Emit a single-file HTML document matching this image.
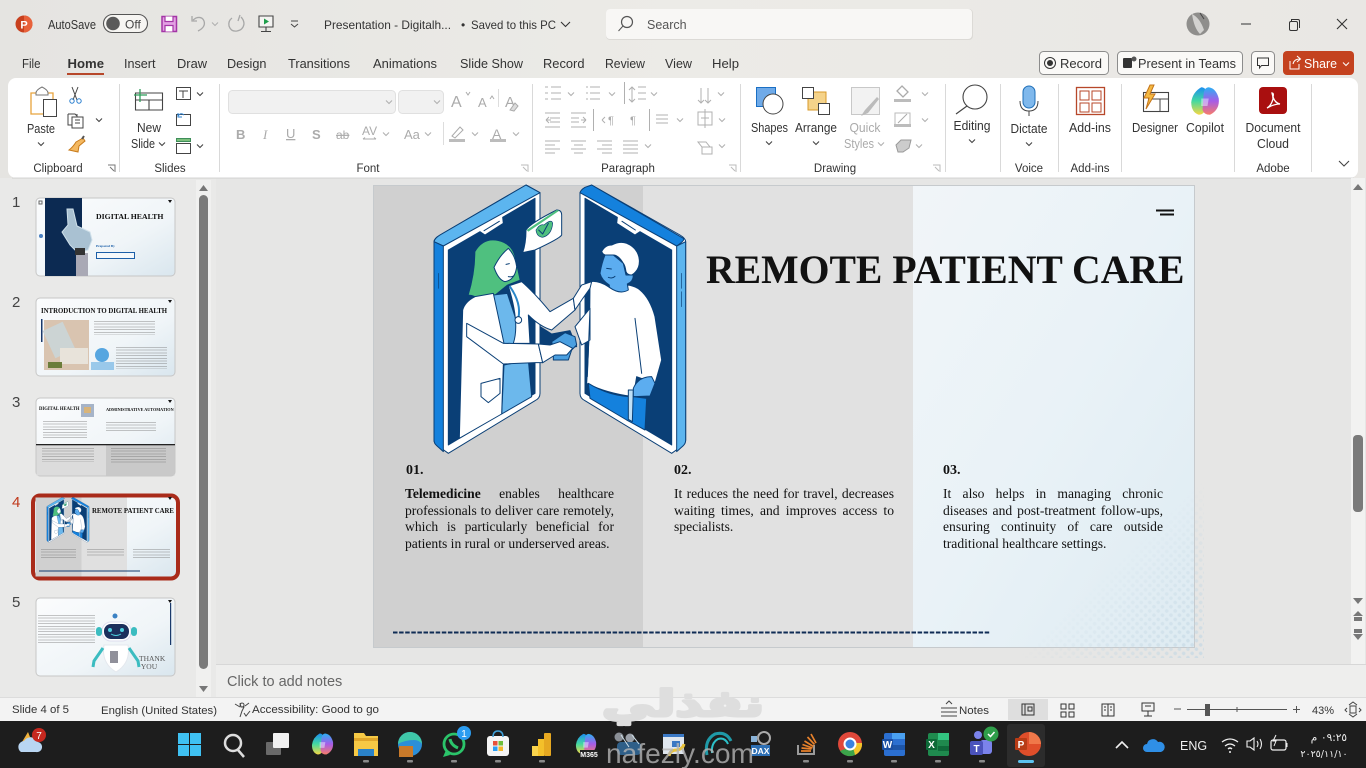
<!DOCTYPE html>
<html><head><meta charset="utf-8"><title>PowerPoint</title>
<style>
html,body{margin:0;padding:0;width:1366px;height:768px;overflow:hidden;background:#e6e6e5;font-family:"Liberation Sans",sans-serif}
#bg{position:absolute;left:0;top:0}
svg text{font-family:"Liberation Sans","DejaVu Sans",sans-serif;font-size:12.5px;fill:#333}
.c{text-anchor:middle}
.p{position:absolute;font-family:"Liberation Serif",serif;font-size:13.6px;line-height:16.67px;color:#111}
.p div{text-align:justify;text-align-last:justify;white-space:nowrap}
.p div.l{text-align-last:left}
.n{position:absolute;font-family:"Liberation Serif",serif;font-weight:bold;font-size:14px;color:#111}
.b{position:absolute;background:repeating-linear-gradient(#777 0 1px,transparent 1px 2.7px);opacity:.42}
.t{position:absolute;font-family:"Liberation Serif",serif;font-weight:bold;color:#111;white-space:nowrap}
</style></head><body>
<svg id="bg" width="1366" height="768" viewBox="0 0 1366 768" xmlns="http://www.w3.org/2000/svg">
<defs>
<linearGradient id="tb" x1="0" x2="1"><stop offset="0" stop-color="#e5e4e1"/><stop offset=".5" stop-color="#ecebe7"/><stop offset="1" stop-color="#e9e7e4"/></linearGradient>
<linearGradient id="sr" x1="0" y1="0" x2="1" y2="1"><stop offset="0" stop-color="#f1f5f8"/><stop offset=".5" stop-color="#e9f2f7"/><stop offset="1" stop-color="#deebf2"/></linearGradient>
<linearGradient id="th" x1="0" y1="0" x2="1" y2="1"><stop offset="0" stop-color="#fbfcfd"/><stop offset=".6" stop-color="#f0f5f8"/><stop offset="1" stop-color="#d9e6ee"/></linearGradient>
<linearGradient id="copA" x1="0" y1="0" x2="0" y2="1"><stop offset="0" stop-color="#1b8ef0"/><stop offset=".5" stop-color="#44d9a0"/><stop offset="1" stop-color="#f6d743"/></linearGradient>
<linearGradient id="copB" x1="0" y1="0" x2="0" y2="1"><stop offset="0" stop-color="#2ab0f5"/><stop offset=".5" stop-color="#a65ce8"/><stop offset="1" stop-color="#f77c6a"/></linearGradient>
<linearGradient id="fade" x1="0" y1="0" x2="1" y2="1"><stop offset=".55" stop-color="#000"/><stop offset="1" stop-color="#ddd"/></linearGradient>
<mask id="hm"><rect x="980" y="440" width="240" height="230" fill="url(#fade)"/></mask>
<pattern id="dots" width="6" height="6" patternUnits="userSpaceOnUse" patternTransform="rotate(45)"><circle cx="3" cy="3" r="1.8" fill="#c4d8e4"/></pattern>
<symbol id="ill" viewBox="0 0 840 840">
<g stroke="#0a3f76" stroke-width="3" stroke-linejoin="round" stroke-linecap="round">
<path d="M345 430L395 462L450 452L470 500L400 505L345 495Z" fill="#0a3f76"/>
<path d="M42 185Q42 175 60 165L318 15L360 38V640Q360 655 345 662L85 820L50 795Q42 788 42 780Z" fill="#fff"/>
<path d="M42 185Q44 175 60 165L318 15L360 38L70 198Z" fill="#5cb5ef"/>
<path d="M42 185L70 198V815L50 797Q42 790 42 780Z" fill="#1481dd"/>
<path d="M85 210L180 155L195 165L250 130L248 112L345 55V640L85 795Z" fill="#0a3f76"/>
<path d="M192 152L238 124" fill="none"/>
<path d="M56 280V325" stroke-width="2" fill="none"/>
<path d="M797 185Q797 175 780 165L515 15L480 38V640Q480 655 495 662L755 820L790 795Q797 788 797 780Z" fill="#fff"/>
<path d="M480 38Q482 30 495 22L515 15L790 175Q797 180 770 198Z" fill="#1481dd"/>
<path d="M797 185L770 198V815L790 797Q797 790 797 780Z" fill="#5cb5ef"/>
<path d="M755 210L660 155L645 165L590 130L592 112L495 55V640L755 795Z" fill="#0a3f76"/>
<path d="M606 124L646 150" fill="none"/>
<path d="M784 280V325M784 335V380" stroke-width="2" fill="none"/>
<path d="M145 345Q165 280 165 215Q190 172 235 182Q280 192 287 240L300 300L262 315L225 345Q225 385 245 435Q205 395 190 365Q165 345 145 345Z" fill="#4fc07f" stroke-width="2"/>
<path d="M222 262Q240 225 265 205Q285 225 290 260Q285 300 255 305Q235 300 222 262Z" fill="#fff"/>
<path d="M258 253l10 -2M265 290q10 2 17 -3" fill="none"/>
<path d="M220 345L262 340L305 470L330 490L250 495Z" fill="#6cb8ec"/>
<path d="M252 555L325 540L335 650L245 702Z" fill="#6cb8ec"/>
<path d="M118 775L128 390Q135 365 165 350L220 340L252 490L270 490L250 555L245 702Z" fill="#fff"/>
<path d="M265 318L305 305Q340 335 390 395L460 355L465 390L395 450Q360 440 325 405L330 490L280 490Q300 430 265 318Z" fill="#fff"/>
<path d="M183 610L240 595V640L205 668L183 650Z" fill="#fff"/>
<path d="M270 320Q305 370 295 415" fill="none" stroke="#2a87c8" stroke-width="6"/>
<circle cx="295" cy="420" r="10" fill="#fff"/>
<path d="M140 430L250 490L355 492L368 548L345 548L250 552L140 470Z" fill="#fff"/>
<path d="M500 610Q510 450 510 305Q535 300 565 320Q600 345 625 315Q650 320 660 330Q690 355 705 410L725 540L705 610L650 590L640 650Q560 640 500 610Z" fill="#fff"/>
<path d="M510 385L465 440L485 495L510 480Z" fill="#fff"/>
<path d="M510 385L502 590M645 415L665 580" fill="none"/>
<path d="M395 485L435 458L465 470L470 495L455 510L400 505Z" fill="#4a9fe0"/>
<path d="M400 520L455 510L445 540L400 540Z" fill="#4a9fe0"/>
<path d="M355 492L390 495L420 485L458 505L440 525L405 525L368 548Z" fill="#fff"/>
<path d="M460 355L485 315L515 305L510 325L485 360L465 390Z" fill="#fff"/>
<path d="M505 610Q570 650 640 650L680 655L675 750L620 720L510 655Z" fill="#1481dd"/>
<path d="M625 630L640 630L637 725L625 718Z" fill="#bfe0f7"/>
<path d="M640 625Q655 590 695 590L705 610L690 648L640 650Z" fill="#5cadf0"/>
<circle cx="625" cy="295" r="14" fill="#5cadf0"/>
<path d="M555 225L580 225L610 250L618 285L640 285Q640 305 622 312L625 330Q600 345 568 322L568 315Q545 300 540 280Q545 250 555 225Z" fill="#5cadf0"/>
<path d="M545 215Q555 195 575 195Q600 182 620 190Q655 205 658 240Q660 270 635 285Q622 285 618 275Q615 255 610 250Q595 225 580 225L555 225Q548 222 545 215Z" fill="#fff"/>
<path d="M560 265l14 2M565 292q12 5 20 -3" fill="none"/>
<path d="M318 150Q330 130 410 90Q425 90 425 105L425 165Q420 175 345 210L308 218Q318 190 318 150Z" fill="#fff"/>
<path d="M320 150L410 90L418 92L325 155Z" fill="#4fc07f" stroke="none"/>
<path d="M348 150Q360 130 372 135Q395 115 398 130Q395 165 368 172Q350 170 348 150Z" fill="#4fc07f" stroke-width="2"/>
<path d="M356 150L368 162L385 130" fill="none"/>
</g>
</symbol>
<symbol id="cp" viewBox="0 0 24 24"><path d="M9 1Q12 1 13 4L12 20Q10 23 7 23Q1 21 1 13Q2 5 9 1Z" fill="url(#copA)"/><path d="M15 1Q21 2 23 10Q24 19 16 23Q11 23 10 19L11 5Q12 1 15 1Z" fill="url(#copB)"/><path d="M9 10h6l-1 6H9z" fill="#eaf2ff" opacity=".5"/></symbol>
<g id="chv"><path d="M-3 -1.5L0 1.5L3 -1.5" fill="none" stroke="#444" stroke-width="1.1"/></g>
<g id="chg"><path d="M-3 -1.5L0 1.5L3 -1.5" fill="none" stroke="#b0b0b0" stroke-width="1.1"/></g>
</defs>

<rect width="1366" height="180" fill="url(#tb)"/>
<rect y="178" width="1366" height="490" fill="#e6e6e5"/>
<rect x="0" y="178" width="216" height="520" fill="#e9e9e8"/>

<!-- title bar -->
<circle cx="24" cy="24" r="8.5" fill="#c8401e"/><path d="M24 15.5a8.5 8.500 0 0 1 0 17z" fill="#e8613a"/><text x="24" y="28.500" class="c" style="font-size:11px;font-weight:bold;fill:#fff">P</text>
<text x="48" y="29" textLength="48" lengthAdjust="spacingAndGlyphs">AutoSave</text>
<rect x="103.500" y="14.500" width="44" height="18" rx="9" fill="#f6f5f2" stroke="#555" stroke-width="1.100"/><circle cx="113" cy="23.500" r="6.800" fill="#5a5a5a"/><text x="125" y="28.500" style="font-size:12px;fill:#444">Off</text>
<rect x="162" y="16.500" width="14.500" height="15" fill="#e3a1e3" stroke="#a436a6" stroke-width="1.500"/><path d="M165 16.500v5h8v-5M165 31.500v-6h8v6" fill="#fff" stroke="#a436a6" stroke-width="1.200"/>
<path d="M198 31q8 -4 6 -10q-2 -5 -8 -3l-3 2M192 16v5h5" fill="none" stroke="#a8a8a8" stroke-width="1.300"/><use href="#chg" x="215" y="24"/>
<path d="M232 18q-4 3 -3 8q2 6 8 5q6 -1 7 -7q0 -4 -3 -7M240 15l-2 6" fill="none" stroke="#a8a8a8" stroke-width="1.300"/>
<path d="M259 16h14v11h-14zM266 27v4M261 31.500h10" fill="#f4f4f2" stroke="#444" stroke-width="1.100"/><path d="M264 18.500l5 3l-5 3z" fill="#1e9e4a"/>
<path d="M291 21h7M291 24l3.500 3l3.500 -3" fill="none" stroke="#444"/>
<text x="324" y="29" style="font-size:12px" textLength="127" lengthAdjust="spacingAndGlyphs">Presentation - Digitalh...</text><text x="461" y="29" style="font-size:12px">•</text><text x="471" y="29" style="font-size:12px" textLength="85" lengthAdjust="spacingAndGlyphs">Saved to this PC</text><path d="M561 22l4.500 4.500l4.500 -4.500" fill="none" stroke="#333" stroke-width="1.100"/>
<rect x="606" y="9" width="367" height="31" rx="4" fill="#dcdad6"/><rect x="606" y="9" width="366" height="30" rx="4" fill="#f8f7f5"/>
<circle cx="627" cy="22" r="5.500" fill="none" stroke="#555" stroke-width="1.200"/><path d="M623 26l-4.500 5" stroke="#555" fill="none"/><text x="647" y="29" style="font-size:12.500px;fill:#555">Search</text>
<circle cx="1198" cy="24" r="11.500" fill="#8f8e8c"/><path d="M1192 14q8 4 12 16l-4 4q-6 -6 -8 -20z" fill="#d3d2d0"/><path d="M1200 13l4 6" stroke="#444"/>
<path d="M1241 24h10" stroke="#333" stroke-width="1"/><rect x="1289.500" y="21.500" width="8" height="9" rx="1.500" fill="none" stroke="#333"/><path d="M1291.500 21v-1.500h6.500q1.500 0 1.500 1.500v7" fill="none" stroke="#333"/><path d="M1337 19l10 10M1347 19l-10 10" stroke="#333" stroke-width="1.100"/>

<!-- tabs -->
<text x="22" y="68" textLength="18.500" lengthAdjust="spacingAndGlyphs">File</text><text x="67.500" y="68" textLength="36.500" lengthAdjust="spacingAndGlyphs" style="font-weight:bold">Home</text><text x="124" y="68" textLength="31.500" lengthAdjust="spacingAndGlyphs">Insert</text><text x="177" y="68" textLength="30" lengthAdjust="spacingAndGlyphs">Draw</text><text x="227" y="68" textLength="39.500" lengthAdjust="spacingAndGlyphs">Design</text><text x="288" y="68" textLength="62" lengthAdjust="spacingAndGlyphs">Transitions</text><text x="373" y="68" textLength="64" lengthAdjust="spacingAndGlyphs">Animations</text><text x="460" y="68" textLength="63" lengthAdjust="spacingAndGlyphs">Slide Show</text><text x="543" y="68" textLength="41.500" lengthAdjust="spacingAndGlyphs">Record</text><text x="605" y="68" textLength="40" lengthAdjust="spacingAndGlyphs">Review</text><text x="665" y="68" textLength="27" lengthAdjust="spacingAndGlyphs">View</text><text x="712" y="68" textLength="27" lengthAdjust="spacingAndGlyphs">Help</text>
<rect x="67" y="73" width="37" height="2" fill="#b7472a"/>
<rect x="1039.500" y="51.500" width="69" height="23" rx="4" fill="#faf9f7" stroke="#8c8c8c"/><circle cx="1050" cy="63" r="5.500" fill="none" stroke="#333"/><circle cx="1050" cy="63" r="3" fill="#333"/><text x="1060" y="68" textLength="42" lengthAdjust="spacingAndGlyphs">Record</text>
<rect x="1117.500" y="51.500" width="125" height="23" rx="4" fill="#faf9f7" stroke="#8c8c8c"/><rect x="1123" y="58" width="9" height="10" rx="1" fill="#333"/><circle cx="1134" cy="59" r="2.500" fill="#555"/><text x="1138" y="68" textLength="98" lengthAdjust="spacingAndGlyphs">Present in Teams</text>
<rect x="1251.500" y="51.500" width="23" height="23" rx="4" fill="#faf9f7" stroke="#8c8c8c"/><path d="M1257.500 58h11v7.500h-7l-2 2.500v-2.500h-2z" fill="none" stroke="#333"/>
<rect x="1283" y="51" width="71" height="24" rx="4" fill="#c4421f"/><path d="M1290 61v8h9v-5M1293 64q1 -5 7 -5M1297 56l3.500 3l-3.500 3" fill="none" stroke="#fff"/><text x="1304" y="68" textLength="33" lengthAdjust="spacingAndGlyphs" style="fill:#fff">Share</text><path d="M1343 62.500l3 3l3 -3" fill="none" stroke="#fff"/>

<!-- ribbon -->
<rect x="8" y="78" width="1350" height="100" rx="8" fill="#fff"/><rect x="12" y="177.500" width="1342" height="1.200" fill="#d6d6d5"/>
<g stroke="#d9d9d9"><path d="M119.500 84V172M219.500 84V172M532.500 84V172M740.500 84V172M945.500 84V172M1000.500 84V172M1058.500 84V172M1121.500 84V172M1234.500 84V172M1311.500 84V172"/></g>
<text x="58" y="172" class="c" style="font-size:11.500px">Clipboard</text><text x="170" y="172" class="c" style="font-size:11.500px">Slides</text><text x="368" y="172" class="c" style="font-size:11.500px">Font</text><text x="628" y="172" class="c" style="font-size:11.500px">Paragraph</text><text x="835" y="172" class="c" style="font-size:11.500px">Drawing</text><text x="1029" y="172" class="c" style="font-size:11.500px">Voice</text><text x="1090" y="172" class="c" style="font-size:11.500px">Add-ins</text><text x="1273" y="172" class="c" style="font-size:11.500px">Adobe</text>
<path d="M108 165h7v7M110 167l4 4" fill="none" stroke="#777"/><path d="M521 165h7v7M523 167l4 4" fill="none" stroke="#bbb"/><path d="M729 165h7v7M731 167l4 4" fill="none" stroke="#bbb"/><path d="M933 165h7v7M935 167l4 4" fill="none" stroke="#bbb"/>

<!-- clipboard -->
<path d="M31 93h22v21h-22z" fill="#fff" stroke="#e8a33d" stroke-width="1.300"/><path d="M36 93q0 -3 6 -6q6 3 6 6v2h-12z" fill="#fff" stroke="#777"/><rect x="43.500" y="99.500" width="13" height="17" fill="#fff" stroke="#444"/>
<text x="41" y="133" class="c" textLength="28" lengthAdjust="spacingAndGlyphs">Paste</text><use href="#chv" x="41" y="144"/>
<path d="M72 87l5 13M78 87l-5 13" stroke="#444" fill="none"/><circle cx="72" cy="101" r="2.200" fill="none" stroke="#2a7fcf"/><circle cx="79" cy="101" r="2.200" fill="none" stroke="#2a7fcf"/>
<path d="M68 114h7l2 2v-2M72 117h11v11h-11zM68 114v11h4M75 120h5M75 123h5" fill="none" stroke="#444"/><use href="#chv" x="99" y="120"/>
<path d="M76 142l7 -4l2 3l-6 5l-1 6l-9 -2q4 -3 7 -8z" fill="#f4b860" stroke="#c77a1a"/><path d="M82 139l2 -3" stroke="#555" stroke-width="2"/>

<!-- slides -->
<path d="M135.500 93h27v17h-27zM135.500 100h27M149 100v10" fill="#fff" stroke="#444" stroke-width="1.100"/><path d="M140 89v13M134 95h13" stroke="#2f9e5a" stroke-width="1.300"/>
<text x="149" y="132" class="c" textLength="24" lengthAdjust="spacingAndGlyphs">New</text><text x="143" y="148" class="c" textLength="24" lengthAdjust="spacingAndGlyphs">Slide</text><use href="#chv" x="162" y="144"/>
<rect x="176.500" y="87.500" width="14" height="12" fill="#fff" stroke="#444"/><path d="M179 91h9M183 91v7" stroke="#444" fill="none"/><use href="#chv" x="200" y="94"/>
<rect x="176.500" y="114.500" width="14" height="11" fill="#fff" stroke="#444"/><path d="M178 116q3 -4 6 -1M178 113v4h4" fill="none" stroke="#2a7fcf"/>
<rect x="176.500" y="138.500" width="14" height="3" fill="#7cc07c" stroke="#3e8e5a"/><rect x="176.500" y="143.500" width="14" height="10" fill="#fff" stroke="#444"/><use href="#chv" x="200" y="146"/>

<!-- font -->
<rect x="228.500" y="90.500" width="167" height="23" rx="4" fill="#f1f1f1" stroke="#e0e0e0"/><rect x="398.500" y="90.500" width="45" height="23" rx="4" fill="#f1f1f1" stroke="#e0e0e0"/><use href="#chg" x="389" y="102"/><use href="#chg" x="437" y="102"/>
<text x="451" y="107" style="font-size:16px;fill:#ababab">A</text><text x="478" y="107" style="font-size:13px;fill:#ababab">A</text><text x="505" y="107" style="font-size:15px;fill:#ababab">A</text>
<text x="236" y="139" style="font-size:13px;font-weight:bold;fill:#ababab">B</text><text x="263" y="139" style="font-size:13px;font-style:italic;fill:#ababab;font-family:'Liberation Serif'">I</text><text x="286" y="138" style="font-size:13px;fill:#ababab;text-decoration:underline">U</text><text x="312" y="139" style="font-size:13px;font-weight:bold;fill:#ababab">S</text><text x="336" y="139" style="font-size:12px;fill:#ababab;text-decoration:line-through">ab</text><text x="362" y="135" style="font-size:12px;fill:#ababab">AV</text><text x="404" y="139" style="font-size:13px;fill:#ababab">Aa</text><text x="492" y="139" style="font-size:14px;fill:#ababab">A</text>
<path d="M466 92l2 3l2 -3M490 99l2 -3l2 3" fill="none" stroke="#ababab"/><path d="M498.500 89v18" stroke="#ddd"/><path d="M510 110l5 -7l3 3l-4 5z" fill="#ddd" stroke="#ababab"/>
<path d="M363 139h13M363 139l2 -1.500M376 139l-2 -1.500" fill="none" stroke="#ababab"/><use href="#chg" x="386" y="134"/><use href="#chg" x="428" y="134"/><path d="M443.500 122v23" stroke="#ddd"/>
<path d="M452 136l8 -9l3 3l-8 8z" fill="none" stroke="#ababab"/><rect x="449" y="139" width="16" height="3" fill="#bcbcbc"/><rect x="490" y="139" width="16" height="3" fill="#bcbcbc"/><use href="#chg" x="475" y="134"/><use href="#chg" x="516" y="134"/>

<!-- paragraph -->
<g stroke="#b0b0b0" fill="none">
<path d="M545 87h3M545 93h3M545 99h3M551 87h10M551 93h10M551 99h10"/><path d="M590 87h10M590 93h10M590 99h10M587 86v2M587 92v2M587 98v2"/><path d="M624.500 82v22M632 87v15M629 90l3 -3l3 3M629 99l3 3l3 -3M638 87h8M638 93h8M638 99h8"/>
<path d="M545 113h15M550 118h10M550 122h10M545 127h15M546 120l3 -3M546 120l3 3M546 120h5"/><path d="M571 113h15M571 118h8M571 122h8M571 127h15M586 120l-3 -3M586 120l-3 3M581 120h5"/>
<path d="M593.500 109v22M649.500 109v22"/><path d="M602 120l3 -3M602 120l3 3"/>
<path d="M545 141h15M545 145h10M545 149h15M545 153h10"/><path d="M571 141h15M574 145h9M571 149h15M574 153h9"/><path d="M597 141h15M602 145h10M597 149h15M602 153h10"/><path d="M623 141h15M623 145h15M623 149h15M623 153h15"/>
<path d="M656 115h12M656 119h12M656 123h12"/>
<path d="M701 88v15M698 100l3 3l3 -3M708 88v15M705 100l3 3l3 -3"/>
<path d="M698 112h14v13h-14zM705 109v19M701 118h8"/><path d="M698 142l8 0l4 5h-8zM702 147h10v7h-10z"/>
</g>
<text x="608" y="124" style="font-size:11px;fill:#ababab">¶</text><text x="630" y="124" style="font-size:11px;fill:#ababab">¶</text>
<use href="#chg" x="571" y="94"/><use href="#chg" x="612" y="94"/><use href="#chg" x="654" y="94"/><use href="#chg" x="721" y="94"/><use href="#chg" x="680" y="120"/><use href="#chg" x="722" y="120"/><use href="#chg" x="648" y="146"/><use href="#chg" x="722" y="146"/>

<!-- drawing -->
<rect x="756.500" y="87.500" width="19" height="19" fill="#6faae8" stroke="#1a6fc4"/><circle cx="773" cy="104" r="10" fill="#fff" stroke="#444"/>
<text x="769.500" y="132" class="c" textLength="37" lengthAdjust="spacingAndGlyphs">Shapes</text><use href="#chv" x="769" y="143"/>
<rect x="808" y="92" width="18" height="18" fill="#f5d38a" stroke="#d89a2a"/><rect x="802.500" y="87.500" width="11" height="11" fill="#fff" stroke="#444"/><rect x="818.500" y="103.500" width="11" height="11" fill="#fff" stroke="#444"/>
<text x="816" y="132" class="c" textLength="42" lengthAdjust="spacingAndGlyphs">Arrange</text><use href="#chv" x="816" y="143"/>
<rect x="851.500" y="87.500" width="28" height="27" fill="#f2f2f2" stroke="#c8c8c8"/><path d="M861 116l4 -6l12 -13l2 2l-11 14z" fill="#bbb"/>
<text x="865" y="132" class="c" textLength="31" lengthAdjust="spacingAndGlyphs" style="fill:#aaa">Quick</text><text x="859" y="148" class="c" textLength="30" lengthAdjust="spacingAndGlyphs" style="fill:#aaa">Styles</text><use href="#chg" x="881" y="144"/>
<path d="M902 86l6 6l-5 5l-6 -6z" fill="none" stroke="#ababab" stroke-width="1.300"/><rect x="894" y="99" width="17" height="3" fill="#bcbcbc"/><rect x="895" y="113" width="15" height="12" fill="none" stroke="#bbb"/><rect x="894" y="124" width="17" height="3" fill="#bcbcbc"/><path d="M898 123l9 -9" stroke="#aaa"/><path d="M896 145l5 -5h10l-2 8l-6 4h-5z" fill="#ccc" stroke="#999"/>
<use href="#chg" x="925" y="94"/><use href="#chg" x="925" y="120"/><use href="#chg" x="919" y="146"/>

<!-- editing -->
<circle cx="975" cy="97" r="12" fill="#fff" stroke="#444" stroke-width="1.100"/><path d="M967 106l-11 8" stroke="#444" stroke-width="1.200"/>
<text x="972" y="130" class="c" textLength="37" lengthAdjust="spacingAndGlyphs">Editing</text><use href="#chv" x="972" y="141"/>
<rect x="1023" y="86" width="12" height="22" rx="6" fill="#7fb8ec" stroke="#1f6fb8"/><path d="M1020 101q0 10 9 10q9 0 9 -10M1029 111v5" fill="none" stroke="#444"/>
<text x="1029" y="133" class="c" textLength="37" lengthAdjust="spacingAndGlyphs">Dictate</text><use href="#chv" x="1029" y="144"/>
<rect x="1076.500" y="87.500" width="28" height="27" fill="#fff" stroke="#b7472a" stroke-width="1.300"/><path d="M1080 91h9v9h-9zM1092 91h9v9h-9zM1080 103h9v9h-9zM1092 103h9v9h-9z" fill="none" stroke="#b7472a"/>
<text x="1090" y="132" class="c" textLength="42" lengthAdjust="spacingAndGlyphs">Add-ins</text>
<rect x="1143.500" y="92.500" width="25" height="19" fill="#fff" stroke="#444" stroke-width="1.100"/><path d="M1148 99h20M1160 99v12" stroke="#444"/><path d="M1150 85l-6 13h5l-3 11l9 -15h-5l4 -9z" fill="#f4b942" stroke="#c4741a"/>
<text x="1155" y="132" class="c" textLength="46" lengthAdjust="spacingAndGlyphs">Designer</text>
<use href="#cp" x="1190" y="86" width="30" height="30"/>
<text x="1205" y="132" class="c" textLength="38" lengthAdjust="spacingAndGlyphs">Copilot</text>
<rect x="1259" y="87" width="28" height="27" rx="4" fill="#a90f0f"/><path d="M1267 108q4 -2 6 -9q0 -3 -1 -6q2 0 1 4q2 6 7 7q-6 0 -13 4z" fill="none" stroke="#fff" stroke-width="1.300"/>
<text x="1273" y="132" class="c" textLength="55" lengthAdjust="spacingAndGlyphs">Document</text><text x="1273" y="148" class="c" textLength="32" lengthAdjust="spacingAndGlyphs">Cloud</text>
<path d="M1339 161l5 5l5 -5" fill="none" stroke="#444" stroke-width="1.100"/>

<!-- thumbnails pane scroll -->
<rect x="196" y="180" width="15" height="518" fill="#f0f0ef"/>
<path d="M199 191l4.500 -6l4.500 6z" fill="#777"/><rect x="199" y="195" width="9" height="474" rx="4.500" fill="#7a7a7a"/><path d="M199 686l4.500 6l4.500 -6z" fill="#777"/>
<text x="12" y="207" style="font-size:15px;fill:#444">1</text><text x="12" y="307" style="font-size:15px;fill:#444">2</text><text x="12" y="407" style="font-size:15px;fill:#444">3</text><text x="12" y="507" style="font-size:15px;fill:#c0391b">4</text><text x="12" y="607" style="font-size:15px;fill:#444">5</text>
<g fill="url(#th)" stroke="#c6c6c6"><rect x="36" y="198" width="139" height="78" rx="4"/><rect x="36" y="298" width="139" height="78" rx="4"/><rect x="36" y="398" width="139" height="78" rx="4"/><rect x="36" y="598" width="139" height="78" rx="4"/></g>
<rect x="33" y="495.500" width="145" height="83" rx="7" fill="url(#th)" stroke="#a92b1a" stroke-width="4"/>

<!-- thumb1 -->
<rect x="45" y="198" width="37" height="78" fill="#0c2a52"/><path d="M67 209l6 0l4 17l13 6l2 8l-4 10l-10 3l-8 -8l-8 -13l6 -7z" fill="#a9c1d2" stroke="#cfe0ea"/><rect x="76" y="253" width="12" height="23" fill="#a9a9b5"/><rect x="75" y="248" width="10" height="7" fill="#333"/>
<circle cx="41" cy="236" r="2" fill="#4a7fc0"/><rect x="39" y="201" width="3" height="3" fill="none" stroke="#666"/>
<rect x="96.500" y="252.500" width="38" height="6" fill="#f4f8fb" stroke="#1c5fa8"/><path d="M168 200h4l-2 3z" fill="#111"/>

<!-- thumb2 -->
<rect x="44" y="320" width="45" height="50" fill="#d9c4b0"/><rect x="48" y="325" width="22" height="30" fill="#ccd4d4" transform="rotate(-25 59 340)"/><rect x="60" y="348" width="28" height="16" fill="#e8e3da"/><rect x="48" y="362" width="14" height="6" fill="#6b7d3a"/><rect x="41" y="319" width="1.500" height="23" fill="#1a3a6c"/>
<circle cx="102" cy="355" r="7" fill="#56a6e0"/><rect x="91" y="362" width="23" height="8" fill="#56a6e0" opacity=".55"/><path d="M168 300h4l-2 3z" fill="#111"/>
<!-- thumb3 -->
<rect x="36.500" y="444" width="70" height="31.500" fill="#dcdcdc"/><rect x="106" y="444" width="68.500" height="31.500" fill="#c9c9c9"/><rect x="36" y="444" width="139" height="1.300" fill="#222"/>
<rect x="81" y="404" width="13" height="13" fill="#a6b4c8"/><rect x="84" y="407" width="7" height="6" fill="#d8b47a"/><path d="M168 400h4l-2 3z" fill="#111"/>
<!-- thumb4 -->
<rect x="35.500" y="497.500" width="46" height="79" fill="#d0d0d0"/><rect x="81.500" y="497.500" width="45.500" height="79" fill="#e0e0e0"/>
<use href="#ill" x="44.500" y="496.500" width="47" height="47"/><rect x="39" y="570.500" width="101" height="1" fill="#123a6c"/><path d="M168 497h4l-2 3z" fill="#111"/>
<!-- thumb5 -->
<rect x="170" y="603" width="1.200" height="42" fill="#1a3a6c"/><path d="M168 600h4l-2 3z" fill="#111"/>
<circle cx="115" cy="616" r="2.500" fill="#3b82c4"/><rect x="102" y="622" width="29" height="19" rx="9" fill="#fff" stroke="#dde"/><rect x="104" y="624" width="25" height="15" rx="7" fill="#1c2f5c"/><circle cx="110" cy="630" r="2" fill="#4ed0e0"/><circle cx="122" cy="630" r="2" fill="#4ed0e0"/><path d="M111 634q5 3 10 0" stroke="#4ed0e0" fill="none"/><rect x="96" y="627" width="6" height="9" rx="3" fill="#3bbcc0"/><rect x="131" y="627" width="6" height="9" rx="3" fill="#3bbcc0"/>
<path d="M104 645h24q3 18 -12 27q-15 -9 -12 -27z" fill="#fff" stroke="#e4e8ee"/><rect x="110" y="651" width="8" height="12" fill="#90909a"/><path d="M103 648l-9 13l-1 6M129 648l9 13l1 6" stroke="#3bbcc0" stroke-width="3" fill="none"/>

<!-- main slide -->
<rect x="373" y="185" width="270" height="462" fill="#d0d0d0"/><rect x="643" y="185" width="270" height="462" fill="#e1e1e1"/><rect x="913" y="185" width="281" height="462" fill="url(#sr)"/>
<rect x="373.500" y="185.500" width="821" height="462" fill="none" stroke="#c6cacd"/>
<rect x="980" y="440" width="224" height="218" fill="url(#dots)" mask="url(#hm)"/>
<use href="#ill" x="420" y="180" width="280" height="280"/>
<path d="M1156 210.500h18M1160 214.500h14" stroke="#111" stroke-width="2"/>
<path d="M393 632.500H990" stroke="#0f2c55" stroke-width="2" stroke-dasharray="4.500 1.600"/>

<!-- right scrollbar -->
<rect x="1351" y="178" width="14" height="487" fill="#f2f2f1"/>
<path d="M1353 190l5 -6l5 6z" fill="#777"/><rect x="1353" y="435" width="10" height="77" rx="4" fill="#7a7a7a"/><path d="M1353 598l5 6l5 -6z" fill="#777"/>
<path d="M1353 616l5 -5l5 5zM1354 617h8v4h-8z" fill="#777"/><path d="M1354 629h8v4h-8zM1353 634h10l-5 6z" fill="#777"/>

<!-- notes -->
<rect x="216" y="665" width="1150" height="33" fill="#eeeeed"/><rect x="216" y="664" width="1150" height="1" fill="#d7d7d7"/><rect x="0" y="697" width="1366" height="1" fill="#dcdcdc"/>
<text x="227" y="686" style="font-size:14.500px;fill:#666">Click to add notes</text>

<!-- status -->
<rect y="698" width="1366" height="23" fill="#f3f3f3"/>
<text x="12" y="713" style="font-size:11px" textLength="57" lengthAdjust="spacingAndGlyphs">Slide 4 of 5</text><text x="101" y="714" style="font-size:11px" textLength="116" lengthAdjust="spacingAndGlyphs">English (United States)</text>
<path d="M240 703l1 4l3 0l-2 4l-2 6M242 703a2 2 0 1 0 .1 0M235 704l5 3M249 703l-4 3M244 713l2 3l4 -5" fill="none" stroke="#444"/>
<text x="252" y="713" style="font-size:11px" textLength="127" lengthAdjust="spacingAndGlyphs">Accessibility: Good to go</text>
<path d="M941 708h16M941 712h16M941 716h16M946 704l3 -3l3 3" fill="none" stroke="#444"/><text x="959" y="714" style="font-size:11px" textLength="30" lengthAdjust="spacingAndGlyphs">Notes</text>
<rect x="1008" y="699" width="40" height="21" fill="#dedede"/>
<path d="M1022 704h12v11h-12zM1025 704v11M1028 707h4v4h-4z" fill="none" stroke="#333"/>
<path d="M1061 704h5v5h-5zM1069 704h5v5h-5zM1061 712h5v5h-5zM1069 712h5v5h-5z" fill="none" stroke="#333"/>
<path d="M1102 704h12v12h-12zM1108 704v12M1104 707h2M1104 710h2M1110 707h2M1110 710h2" fill="none" stroke="#333"/>
<path d="M1142 703h12v8h-12zM1148 711v5M1144 716h8M1145 706h6" fill="none" stroke="#333"/>
<path d="M1174 709h7M1187 709.500h100M1237 707v5M1293 709.500h7M1296.500 706v7" stroke="#555" fill="none"/><rect x="1205" y="704" width="5" height="12" fill="#555"/>
<text x="1312" y="714" style="font-size:11px">43%</text>
<path d="M1349 705l4 -3l4 3M1349 714l4 3l4 -3M1350 706h6v7h-6zM1347 708l-2 2l2 2M1359 708l2 2l-2 2" fill="none" stroke="#444"/>

<!-- taskbar -->
<rect y="721" width="1366" height="47" fill="#1d1d1d"/>
<rect x="1007" y="724" width="38" height="43" rx="3" fill="#2c2c2c"/>
<!-- watermark -->
<text x="683" y="716" class="c" stroke="#dedede" stroke-width="3" stroke-linejoin="round" style="font-size:36px;font-weight:bold;fill:#dedede;font-family:'DejaVu Sans',sans-serif" textLength="162" lengthAdjust="spacingAndGlyphs">نفذلي</text>

<!-- weather -->
<path d="M28 732l2 5l4 1l-4 3l-2 3l-6 -2z" fill="#f0b23c"/><path d="M21 752a6 6 0 0 1 3 -11a8 8 0 0 1 14 1a5 5 0 0 1 -2 10z" fill="#b9d6f2"/><circle cx="39" cy="735" r="7" fill="#c6281f"/><text x="39" y="739" class="c" style="font-size:10px;fill:#fff">7</text>
<!-- win -->
<g fill="#3fc1f2"><rect x="178" y="733" width="11" height="11"/><rect x="190" y="733" width="11" height="11"/><rect x="178" y="745" width="11" height="11"/><rect x="190" y="745" width="11" height="11"/></g>
<circle cx="233" cy="743" r="8" fill="none" stroke="#ddd" stroke-width="2.500"/><path d="M238 750l6 7" stroke="#ddd" stroke-width="2.500"/>
<rect x="266" y="742" width="15" height="13" rx="1" fill="#6a6a6a"/><rect x="273" y="733" width="16" height="15" rx="1" fill="#f2f2f2"/>
<use href="#cp" x="311" y="732" width="23" height="24"/>
<path d="M354 733h10l2 3h12v20h-24z" fill="#f6c945"/><rect x="358" y="749" width="16" height="7" fill="#2a82c8"/><rect x="354" y="738" width="24" height="3" fill="#e0a62a"/>
<circle cx="410" cy="744" r="12" fill="#2c8fd8"/><path d="M398 744a12 12 0 0 1 24 0q-3 -4 -8 -4q-9 0 -16 4z" fill="#3fc7a8"/><rect x="399" y="746" width="14" height="11" fill="#c97a2a"/>
<circle cx="454" cy="744" r="10" fill="none" stroke="#2bc46a" stroke-width="2.800"/><path d="M446 750l-3 7l7 -2" fill="#2bc46a"/><path d="M450 739q1 6 8 9" stroke="#2bc46a" stroke-width="3" fill="none"/><circle cx="464" cy="733" r="7" fill="#2b9cf0"/><text x="464" y="737" class="c" style="font-size:10px;fill:#fff">1</text>
<rect x="487" y="736" width="22" height="20" rx="3" fill="#f4f4f4"/><path d="M493 737q0 -6 5 -6q5 0 5 6" fill="none" stroke="#3fa0d8" stroke-width="1.500"/><rect x="493" y="741" width="4.500" height="4.500" fill="#e8503a"/><rect x="498.500" y="741" width="4.500" height="4.500" fill="#6fbf3a"/><rect x="493" y="746.500" width="4.500" height="4.500" fill="#2a9df4"/><rect x="498.500" y="746.500" width="4.500" height="4.500" fill="#f4b72a"/>
<rect x="532" y="746" width="6" height="10" fill="#f9d34c"/><rect x="538" y="739" width="6" height="17" fill="#f4c02a"/><rect x="544" y="733" width="7" height="23" rx="1" fill="#e6a821"/>
<use href="#cp" x="574" y="733" width="24" height="22"/><rect x="580" y="750" width="18" height="8" fill="#222"/><text x="589" y="757" class="c" style="font-size:7px;fill:#fff;font-weight:bold">M365</text>
<circle cx="619" cy="737" r="4.500" fill="#8a8f96"/><circle cx="630" cy="738" r="4.500" fill="#9aa0a8"/><rect x="617" y="742" width="24" height="13" rx="4" fill="#2f5f88"/><path d="M621 735l8 12M632 735l7 9" stroke="#cfe0ea" fill="none"/>
<rect x="663" y="734" width="21" height="20" fill="#dfe6ee"/><rect x="663" y="734" width="21" height="3" fill="#3a78c4"/><path d="M672 741h8v6h-8z" fill="#3a78c4"/><path d="M669 756q1 -6 8 -6q6 -1 7 -6" stroke="#e8c23a" fill="none" stroke-width="3"/>
<path d="M707 755q-3 -15 8 -21q11 -3 16 7" fill="none" stroke="#1f9aa8" stroke-width="3"/><path d="M712 753q-1 -10 6 -14q7 -2 10 5" fill="none" stroke="#2cc0c8" stroke-width="2"/>
<rect x="751" y="745" width="19" height="11" fill="#2d6fb4"/><text x="760.500" y="754" class="c" style="font-size:8.500px;fill:#fff;font-weight:bold">DAX</text><circle cx="764" cy="738" r="6" fill="none" stroke="#aaa" stroke-width="2"/><rect x="751" y="736" width="6" height="6" fill="#8ab3d8"/>
<path d="M798 745v9h16v-9" fill="none" stroke="#9a9a9a" stroke-width="2"/><path d="M801 751h10M801.500 748l10 1M802.500 744.500l10 3.500M804.500 741l9 5.500M807.500 737l7 7.500M811 734l5 9" stroke="#e7812b" stroke-width="1.700" fill="none"/>
<circle cx="850" cy="744" r="12" fill="#e0483a"/><path d="M840 751a12 12 0 0 0 15 4l5 -9h-8z" fill="#3ca54a"/><path d="M855 755a12 12 0 0 0 7 -12h-10z" fill="#f4c42a"/><circle cx="850" cy="744" r="5.500" fill="#3b82e0" stroke="#fff" stroke-width="2"/>
<rect x="884" y="733" width="21" height="23" rx="2" fill="#2b6fd0"/><rect x="892" y="733" width="13" height="6" fill="#4aa0f0"/><rect x="892" y="745" width="13" height="5" fill="#1d55a8"/><rect x="882" y="739" width="11" height="11" rx="1" fill="#1a4fa3"/><text x="887.500" y="748" class="c" style="font-size:10px;font-weight:bold;fill:#fff">W</text>
<rect x="928" y="733" width="21" height="23" rx="2" fill="#1f8a4e"/><rect x="938" y="733" width="11" height="7" fill="#33c481"/><rect x="938" y="746" width="11" height="5" fill="#0f6a3a"/><rect x="926" y="739" width="11" height="11" rx="1" fill="#0d6a38"/><text x="931.500" y="748" class="c" style="font-size:10px;font-weight:bold;fill:#fff">X</text>
<circle cx="978" cy="735" r="4" fill="#7b83eb"/><rect x="980" y="740" width="12" height="14" rx="3" fill="#7b83eb"/><rect x="970" y="741" width="13" height="14" rx="2" fill="#4b53bc"/><text x="976.500" y="752" class="c" style="font-size:10px;font-weight:bold;fill:#fff">T</text><circle cx="991" cy="734" r="7.500" fill="#2f9e4a"/><path d="M988 734l2.500 2.500l4 -4.500" stroke="#fff" fill="none" stroke-width="1.500"/>
<circle cx="1029" cy="744" r="12" fill="#e04e2a"/><path d="M1029 732a12 12 0 0 1 12 12h-12z" fill="#f0784a"/><rect x="1015" y="738" width="12" height="12" rx="1" fill="#b83c16"/><text x="1021" y="748" class="c" style="font-size:10px;font-weight:bold;fill:#fff">P</text>
<g fill="#8a8a8a"><rect x="363" y="760" width="6" height="2.500" rx="1"/><rect x="407" y="760" width="6" height="2.500" rx="1"/><rect x="451" y="760" width="6" height="2.500" rx="1"/><rect x="495" y="760" width="6" height="2.500" rx="1"/><rect x="539" y="760" width="6" height="2.500" rx="1"/><rect x="803" y="760" width="6" height="2.500" rx="1"/><rect x="847" y="760" width="6" height="2.500" rx="1"/><rect x="891" y="760" width="6" height="2.500" rx="1"/><rect x="935" y="760" width="6" height="2.500" rx="1"/><rect x="979" y="760" width="6" height="2.500" rx="1"/></g>
<rect x="1018" y="760" width="16" height="3" rx="1.500" fill="#5cc3f0"/>
<text x="606" y="763" style="font-size:28px;fill:#b4b4b4;opacity:.8" textLength="148" lengthAdjust="spacingAndGlyphs">nafezly.com</text>

<path d="M1116 748l6 -6l6 6" fill="none" stroke="#f0f0f0" stroke-width="1.600"/>
<path d="M1147 752a4 4 0 0 1 0 -8a6 6 0 0 1 11 -2a5 5 0 0 1 3 10z" fill="#2f8fe6"/>
<text x="1180" y="750" style="font-size:12.500px;fill:#f0f0f0">ENG</text>
<path d="M1222 742q8 -6 16 0M1225 746q5 -4 10 0M1228 749q2 -2 4 0" fill="none" stroke="#f0f0f0" stroke-width="1.300"/><circle cx="1230" cy="752" r="1" fill="#f0f0f0"/>
<path d="M1247 741h3l4 -3v12l-4 -3h-3zM1257 741q2 3 0 6M1260 739q3 5 0 10" fill="none" stroke="#f0f0f0" stroke-width="1.100"/>
<rect x="1271" y="740" width="15" height="10" rx="2" fill="none" stroke="#f0f0f0" stroke-width="1.200"/><path d="M1287 743v4" stroke="#f0f0f0"/><path d="M1276 735l-3 6h3l-2 5" stroke="#f0f0f0" fill="none"/>
<text x="1334" y="741" class="c" style="font-size:10.500px;fill:#f0f0f0;font-family:'DejaVu Sans',sans-serif">٠٩:٢٥</text><text x="1314" y="741" class="c" style="font-size:10.500px;fill:#f0f0f0;font-family:'DejaVu Sans',sans-serif">م</text>
<text x="1324" y="757" class="c" style="font-size:9.500px;fill:#f0f0f0;font-family:'DejaVu Sans',sans-serif">٢٠٢٥/١١/١٠</text>
</svg>

<!-- thumbnail text -->
<div class="t" style="left:96px;top:212px;font-size:7.800px">DIGITAL HEALTH</div>
<div class="t" style="left:96px;top:244px;font-size:3.500px;color:#1c5fa8">Prepared By</div>
<div class="t" style="left:41px;top:307.500px;font-size:6.800px">INTRODUCTION TO DIGITAL HEALTH</div>
<div class="b" style="left:94px;top:321px;width:61px;height:14px"></div>
<div class="b" style="left:116px;top:347px;width:51px;height:22px"></div>
<div class="t" style="left:39px;top:407px;font-size:4.700px">DIGITAL HEALTH</div>
<div class="t" style="left:106px;top:406.500px;font-size:4.200px">ADMINISTRATIVE AUTOMATION</div>
<div class="b" style="left:43px;top:421px;width:44px;height:19px"></div>
<div class="b" style="left:106px;top:422px;width:50px;height:11px"></div>
<div class="b" style="left:42px;top:448px;width:52px;height:14px"></div>
<div class="b" style="left:111px;top:448px;width:55px;height:15px"></div>
<div class="t" style="left:92px;top:508px;font-size:6.800px">REMOTE PATIENT CARE</div>
<div class="b" style="left:41px;top:549px;width:35px;height:11px"></div>
<div class="b" style="left:87px;top:549px;width:37px;height:8px"></div>
<div class="b" style="left:133px;top:549px;width:37px;height:11px"></div>
<div class="b" style="left:38px;top:615px;width:57px;height:28px"></div>
<div class="t" style="left:139px;top:655px;font-size:7.500px;font-weight:normal;color:#555;line-height:8px">THANK<br>&nbsp;YOU</div>

<!-- slide text -->
<div class="t" style="left:706px;top:246px;font-size:39.700px;line-height:48px;color:#111">REMOTE PATIENT CARE</div>
<div class="n" style="left:406px;top:463px">01.</div>
<div class="n" style="left:674px;top:463px">02.</div>
<div class="n" style="left:943px;top:463px">03.</div>
<div class="p" style="left:405px;top:486px;width:209px">
<div><b>Telemedicine</b> enables healthcare</div>
<div>professionals to deliver care remotely,</div>
<div>which is particularly beneficial for</div>
<div class="l">patients in rural or underserved areas.</div>
</div>
<div class="p" style="left:674px;top:486px;width:220px">
<div>It reduces the need for travel, decreases</div>
<div>waiting times, and improves access to</div>
<div class="l">specialists.</div>
</div>
<div class="p" style="left:943px;top:486px;width:220px">
<div>It also helps in managing chronic</div>
<div>diseases and post-treatment follow-ups,</div>
<div>ensuring continuity of care outside</div>
<div class="l">traditional healthcare settings.</div>
</div>
</body></html>
